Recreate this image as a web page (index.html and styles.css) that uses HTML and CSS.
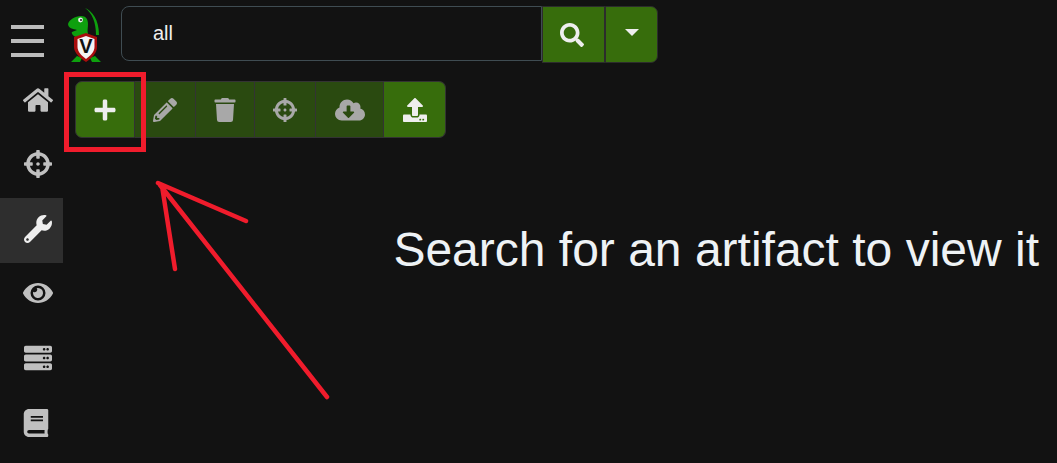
FILE: index.html
```html
<!DOCTYPE html>
<html lang="en">
<head>
    <meta charset="UTF-8">
    <title>Artifacts</title>
    <link rel="stylesheet" href="styles.css">
</head>
<body>
    <div class="app">
        <nav class="sidebar">
            <div class="hamburger"><span></span><span></span><span></span></div>
            <a class="nav-item"><svg class="nav-icon" viewBox="0 0 576 512"><path d="M280.37 148.26L96 300.11V464a16 16 0 0 0 16 16l112.06-.29a16 16 0 0 0 15.92-16V368a16 16 0 0 1 16-16h64a16 16 0 0 1 16 16v95.64a16 16 0 0 0 16 16.05L464 480a16 16 0 0 0 16-16V300L295.67 148.26a12.19 12.19 0 0 0-15.3 0zM571.6 251.47L488 182.56V44.05a12 12 0 0 0-12-12h-56a12 12 0 0 0-12 12v72.61L318.47 43a48 48 0 0 0-61 0L4.34 251.47a12 12 0 0 0-1.6 16.9l25.5 31A12 12 0 0 0 45.15 301l235.22-193.74a12.19 12.19 0 0 1 15.3 0L530.9 301a12 12 0 0 0 16.9-1.6l25.5-31a12 12 0 0 0-1.7-16.93z"/></svg></a>
            <a class="nav-item"><svg class="nav-icon" viewBox="0 0 512 512"><path d="M500 224h-30.364C455.724 130.325 381.675 56.276 288 42.364V12c0-6.627-5.373-12-12-12h-40c-6.627 0-12 5.373-12 12v30.364C130.325 56.276 56.276 130.325 42.364 224H12c-6.627 0-12 5.373-12 12v40c0 6.627 5.373 12 12 12h30.364C56.276 381.675 130.325 455.724 224 469.636V500c0 6.627 5.373 12 12 12h40c6.627 0 12-5.373 12-12v-30.364C381.675 455.724 455.724 381.675 469.636 288H500c6.627 0 12-5.373 12-12v-40c0-6.627-5.373-12-12-12zM288 404.634V364c0-6.627-5.373-12-12-12h-40c-6.627 0-12 5.373-12 12v40.634C165.826 392.232 119.783 346.243 107.366 288H148c6.627 0 12-5.373 12-12v-40c0-6.627-5.373-12-12-12h-40.634C119.768 165.826 165.757 119.783 224 107.366V148c0 6.627 5.373 12 12 12h40c6.627 0 12-5.373 12-12v-40.634C346.174 119.768 392.217 165.757 404.634 224H364c-6.627 0-12 5.373-12 12v40c0 6.627 5.373 12 12 12h40.634C392.232 346.174 346.243 392.217 288 404.634zM288 256c0 17.673-14.327 32-32 32s-32-14.327-32-32c0-17.673 14.327-32 32-32s32 14.327 32 32z"/></svg></a>
            <a class="nav-item active"><svg class="nav-icon" viewBox="0 0 512 512"><path d="M507.73 109.1c-2.24-9.03-13.54-12.09-20.12-5.51l-74.36 74.36-67.88-11.31-11.31-67.88 74.36-74.36c6.62-6.62 3.43-17.9-5.66-20.16-47.38-11.74-99.55.91-136.58 37.93-39.64 39.64-50.55 97.1-34.05 147.2L18.74 402.76c-24.99 24.99-24.99 65.51 0 90.5 24.99 24.99 65.51 24.99 90.5 0l213.21-213.21c50.12 16.71 107.47 5.68 147.37-34.22 37.07-37.07 49.7-89.32 37.91-136.73zM64 472c-13.25 0-24-10.75-24-24 0-13.26 10.75-24 24-24s24 10.74 24 24c0 13.25-10.75 24-24 24z"/></svg></a>
            <a class="nav-item"><svg class="nav-icon" viewBox="0 0 576 512"><path d="M572.52 241.4C518.29 135.59 410.93 64 288 64S57.68 135.64 3.48 241.41a32.35 32.35 0 0 0 0 29.19C57.71 376.41 165.07 448 288 448s230.32-71.64 284.52-177.41a32.35 32.35 0 0 0 0-29.19zM288 400a144 144 0 1 1 144-144 143.93 143.93 0 0 1-144 144zm0-240a95.31 95.31 0 0 0-25.31 3.79 47.85 47.85 0 0 1-66.9 66.9A95.78 95.78 0 1 0 288 160z"/></svg></a>
            <a class="nav-item"><svg class="nav-icon" viewBox="0 0 512 512"><path d="M480 160H32c-17.673 0-32-14.327-32-32V64c0-17.673 14.327-32 32-32h448c17.673 0 32 14.327 32 32v64c0 17.673-14.327 32-32 32zm-48-88c-13.255 0-24 10.745-24 24s10.745 24 24 24 24-10.745 24-24-10.745-24-24-24zm-64 0c-13.255 0-24 10.745-24 24s10.745 24 24 24 24-10.745 24-24-10.745-24-24-24zm112 248H32c-17.673 0-32-14.327-32-32v-64c0-17.673 14.327-32 32-32h448c17.673 0 32 14.327 32 32v64c0 17.673-14.327 32-32 32zm-48-88c-13.255 0-24 10.745-24 24s10.745 24 24 24 24-10.745 24-24-10.745-24-24-24zm-64 0c-13.255 0-24 10.745-24 24s10.745 24 24 24 24-10.745 24-24-10.745-24-24-24zm112 248H32c-17.673 0-32-14.327-32-32v-64c0-17.673 14.327-32 32-32h448c17.673 0 32 14.327 32 32v64c0 17.673-14.327 32-32 32zm-48-88c-13.255 0-24 10.745-24 24s10.745 24 24 24 24-10.745 24-24-10.745-24-24-24zm-64 0c-13.255 0-24 10.745-24 24s10.745 24 24 24 24-10.745 24-24-10.745-24-24-24z"/></svg></a>
            <a class="nav-item"><svg class="nav-icon book" viewBox="0 0 448 512"><path d="M448 360V24c0-13.3-10.7-24-24-24H96C43 0 0 43 0 96v320c0 53 43 96 96 96h328c13.3 0 24-10.7 24-24v-16c0-7.5-3.5-14.3-8.9-18.7-4.2-15.4-4.2-59.3 0-74.7 5.4-4.3 8.9-11.1 8.9-18.6zM128 134c0-3.3 2.7-6 6-6h212c3.3 0 6 2.7 6 6v20c0 3.3-2.7 6-6 6H134c-3.3 0-6-2.7-6-6v-20zm0 64c0-3.3 2.7-6 6-6h212c3.3 0 6 2.7 6 6v20c0 3.3-2.7 6-6 6H134c-3.3 0-6-2.7-6-6v-20zm253.4 250H96c-17.7 0-32-14.3-32-32 0-17.6 14.4-32 32-32h285.4c-1.9 17.1-1.9 46.9 0 64z"/></svg></a>
        </nav>

        <main class="main">
            <header class="topbar">
                <svg class="logo" viewBox="68 8 34 54">
                    <path d="M85 8C92 11 99 19 99 35L96 35C96 22 92 13 85 8z" fill="#0ea00e"/>
                    <path d="M68 24C69 20 75 16 81 16C86 16 88 19 88 24C88 28 87 31 88 34L76 37C73 36 71 33 72 32L77 30C73 29 68 28 68 24z" fill="#0ea00e"/>
                    <path d="M77 56L71 62 80 62 82 58zM90 58L92 62 101 62 95 56z" fill="#0ea00e"/>
                    <circle cx="80.5" cy="20" r="2.4" fill="#eee"/>
                    <circle cx="81" cy="20" r="1" fill="#222"/>
                    <path d="M86 33L97 37 97 47C97 53 92 58 86 62 80 58 74 53 74 47L74 37z" fill="#a80d0d"/>
                    <path d="M86 36L94.500 39 94.500 47C94.500 52 90 56 86 59 82 56 77.500 52 77.500 47L77.500 39z" fill="#f4f4f4"/>
                    <text class="logo-v" x="86" y="53" text-anchor="middle">V</text>
                </svg>
                <div class="search-group">
                    <input class="search-input" type="text" value="all">
                    <button class="btn search-btn"><svg class="btn-icon" viewBox="0 0 512 512"><path d="M505 442.7L405.3 343c-4.5-4.5-10.6-7-17-7H372c27.6-35.3 44-79.7 44-128C416 93.1 322.9 0 208 0S0 93.1 0 208s93.1 208 208 208c48.3 0 92.7-16.4 128-44v16.3c0 6.4 2.5 12.5 7 17l99.7 99.7c9.4 9.4 24.6 9.4 33.9 0l28.3-28.3c9.4-9.4 9.4-24.6.1-34zM208 336c-70.7 0-128-57.2-128-128 0-70.7 57.2-128 128-128 70.7 0 128 57.2 128 128 0 70.7-57.2 128-128 128z"/></svg></button>
                    <button class="btn caret-btn"><span class="caret"></span></button>
                </div>
            </header>

            <div class="toolbar">
                <button class="tool add"><svg class="btn-icon" viewBox="0 0 448 512"><path d="M416 208H272V64c0-17.67-14.33-32-32-32h-32c-17.67 0-32 14.33-32 32v144H32c-17.67 0-32 14.33-32 32v32c0 17.67 14.33 32 32 32h144v144c0 17.67 14.33 32 32 32h32c17.67 0 32-14.33 32-32V304h144c17.67 0 32-14.33 32-32v-32c0-17.67-14.33-32-32-32z"/></svg></button>
                <button class="tool off edit"><svg class="btn-icon" viewBox="0 0 512 512"><path d="M497.9 142.1l-46.1 46.1c-4.7 4.7-12.3 4.7-17 0l-111-111c-4.7-4.7-4.7-12.3 0-17l46.1-46.1c18.7-18.7 49.1-18.7 67.9 0l60.1 60.1c18.8 18.7 18.8 49.1 0 67.9zM284.2 99.8L21.6 362.4.4 483.9c-2.9 16.4 11.4 30.6 27.8 27.8l121.5-21.3 262.6-262.6c4.7-4.7 4.7-12.3 0-17l-111-111c-4.8-4.7-12.4-4.7-17.1 0zM124.1 339.9c-5.5-5.5-5.5-14.3 0-19.8l154-154c5.5-5.5 14.3-5.5 19.8 0s5.5 14.3 0 19.8l-154 154c-5.5 5.5-14.3 5.5-19.8 0zM88 424h48v36.3l-64.5 11.3-31.1-31.1L51.7 376H88v48z"/></svg></button>
                <button class="tool off trash"><svg class="btn-icon" viewBox="0 0 448 512"><path d="M432 32H312l-9.4-18.7A24 24 0 0 0 281.1 0H166.8a23.72 23.72 0 0 0-21.4 13.3L136 32H16A16 16 0 0 0 0 48v32a16 16 0 0 0 16 16h416a16 16 0 0 0 16-16V48a16 16 0 0 0-16-16zM53.2 467a48 48 0 0 0 47.9 45h245.8a48 48 0 0 0 47.9-45L416 128H32z"/></svg></button>
                <button class="tool off hunt"><svg class="btn-icon" viewBox="0 0 512 512"><path d="M500 224h-30.364C455.724 130.325 381.675 56.276 288 42.364V12c0-6.627-5.373-12-12-12h-40c-6.627 0-12 5.373-12 12v30.364C130.325 56.276 56.276 130.325 42.364 224H12c-6.627 0-12 5.373-12 12v40c0 6.627 5.373 12 12 12h30.364C56.276 381.675 130.325 455.724 224 469.636V500c0 6.627 5.373 12 12 12h40c6.627 0 12-5.373 12-12v-30.364C381.675 455.724 455.724 381.675 469.636 288H500c6.627 0 12-5.373 12-12v-40c0-6.627-5.373-12-12-12zM288 404.634V364c0-6.627-5.373-12-12-12h-40c-6.627 0-12 5.373-12 12v40.634C165.826 392.232 119.783 346.243 107.366 288H148c6.627 0 12-5.373 12-12v-40c0-6.627-5.373-12-12-12h-40.634C119.768 165.826 165.757 119.783 224 107.366V148c0 6.627 5.373 12 12 12h40c6.627 0 12-5.373 12-12v-40.634C346.174 119.768 392.217 165.757 404.634 224H364c-6.627 0-12 5.373-12 12v40c0 6.627 5.373 12 12 12h40.634C392.232 346.174 346.243 392.217 288 404.634zM288 256c0 17.673-14.327 32-32 32s-32-14.327-32-32c0-17.673 14.327-32 32-32s32 14.327 32 32z"/></svg></button>
                <button class="tool off download"><svg class="btn-icon wide" viewBox="0 0 640 512"><path d="M537.6 226.6c4.1-10.7 6.4-22.4 6.4-34.6 0-53-43-96-96-96-19.7 0-38.1 6-53.3 16.2C367 64.2 315.3 32 256 32c-88.4 0-160 71.6-160 160 0 2.7.1 5.4.2 8.1C40.2 219.8 0 273.2 0 336c0 79.5 64.5 144 144 144h368c70.7 0 128-57.3 128-128 0-61.9-44-113.6-102.4-125.4zm-132.9 88.7L299.3 420.7c-6.2 6.2-16.4 6.2-22.6 0L171.3 315.3c-10.1-10.1-2.9-27.3 11.3-27.3H248V176c0-8.8 7.2-16 16-16h48c8.8 0 16 7.2 16 16v112h65.4c14.2 0 21.4 17.2 11.3 27.3z"/></svg></button>
                <button class="tool upload"><svg class="btn-icon" viewBox="0 0 512 512"><path d="M296 384h-80c-13.3 0-24-10.7-24-24V192h-87.7c-17.8 0-26.7-21.5-14.1-34.1L242.3 5.7c7.5-7.5 19.8-7.5 27.3 0l152.2 152.2c12.6 12.6 3.7 34.1-14.1 34.1H320v168c0 13.3-10.7 24-24 24zm216-8v112c0 13.3-10.7 24-24 24H24c-13.3 0-24-10.7-24-24V376c0-13.3 10.7-24 24-24h136v8c0 30.9 25.1 56 56 56h80c30.9 0 56-25.1 56-56v-8h136c13.3 0 24 10.7 24 24zm-124 88c0-11-9-20-20-20s-20 9-20 20 9 20 20 20 20-9 20-20zm64 0c0-11-9-20-20-20s-20 9-20 20 9 20 20 20 20-9 20-20z"/></svg></button>
            </div>

            <h1 class="empty-msg">Search for an artifact to view it</h1>
        </main>
    </div>

    <div class="callout-box"></div>
    <svg class="callout-arrow" viewBox="0 0 1057 463">
        <path d="M327 397L160 185M158 183L246 221M162 186L175 269"/>
    </svg>
</body>
</html>
```

FILE: styles.css
```css
body {
    margin: 0;
    background-color: #121212;
    font-family: "Liberation Sans", Arial, sans-serif;
    color: #eee;
    overflow: hidden;
}
button {
    border: none;
    padding: 0;
    cursor: pointer;
}
.app {
    display: flex;
    height: 463px;
}
.sidebar {
    width: 63px;
    flex-shrink: 0;
    display: flex;
    flex-direction: column;
}
.hamburger {
    height: 68.8px;
    flex-shrink: 0;
    box-sizing: border-box;
    padding: 25px 19px 0 11px;
    display: flex;
    flex-direction: column;
    gap: 10px;
}
.hamburger span {
    display: block;
    height: 4px;
    background-color: #bbb;
}
.nav-item {
    height: 64.6px;
    flex-shrink: 0;
    box-sizing: border-box;
    display: flex;
    align-items: center;
    justify-content: flex-end;
    padding: 0 10px 3px 0;
}
.nav-icon {
    width: 30px;
    height: 28px;
    fill: #c0c0c0;
}
.nav-icon.book {
    margin-right: 2px;
}
.nav-item.active {
    background-color: #2e2e2e;
}
.nav-item.active .nav-icon {
    fill: #eee;
}
.main {
    flex: 1;
    min-width: 0;
}
.topbar {
    display: flex;
    align-items: flex-start;
    padding: 6px 0 0 5px;
}
.logo {
    width: 34px;
    height: 54px;
    margin-top: 2px;
}
.logo-v {
    font-family: "Liberation Sans", Arial, sans-serif;
    font-weight: 700;
    font-size: 20px;
    fill: #111;
}
.search-group {
    display: flex;
    margin-left: 19px;
}
.search-input {
    width: 421px;
    height: 55px;
    box-sizing: border-box;
    padding: 0 0 0 31px;
    background-color: #121212;
    border: 1px solid #3f4c52;
    border-radius: 8px 0 0 8px;
    font-family: "Liberation Sans", Arial, sans-serif;
    font-size: 20px;
    color: #eee;
    outline: none;
}
.btn {
    height: 57px;
    background-color: #376d0c;
    display: flex;
    align-items: center;
    justify-content: center;
    border: 1px solid #2c2c2c;
}
.search-btn {
    width: 63px;
    padding-right: 3px;
}
.caret-btn {
    width: 53px;
    border-radius: 0 7px 7px 0;
}
.caret {
    width: 0;
    height: 0;
    margin-bottom: 4px;
    border-left: 7px solid transparent;
    border-right: 7px solid transparent;
    border-top: 7px solid #eee;
}
.btn-icon {
    width: 24px;
    height: 24px;
    fill: #eee;
}
.btn-icon.wide {
    width: 30px;
}
.toolbar {
    display: flex;
    margin: 18px 0 0 12px;
    width: 371px;
    height: 57px;
}
.tool {
    height: 57px;
    display: flex;
    align-items: center;
    justify-content: center;
    background-color: #376d0c;
    border: 1px solid #333;
    border-left: none;
}
.tool.off {
    background-color: #2a4a10;
}
.tool.off .btn-icon {
    fill: #a8a8a8;
}
.add {
    width: 60px;
    border-left: 1px solid #333;
    border-radius: 7px 0 0 7px;
}
.edit {
    width: 61px;
}
.trash {
    width: 59px;
}
.hunt {
    width: 61px;
}
.download {
    width: 68px;
}
.upload {
    width: 62px;
    border-radius: 0 7px 7px 0;
}
.empty-msg {
    margin: 85px 18px 0 0;
    text-align: right;
    font-size: 48px;
    font-weight: 400;
    line-height: 53px;
    color: #eef2f5;
}
.callout-box {
    position: absolute;
    left: 64px;
    top: 72px;
    width: 82px;
    height: 80px;
    box-sizing: border-box;
    border: 5px solid #f01c2c;
}
.callout-arrow {
    position: absolute;
    left: 0;
    top: 0;
    width: 1057px;
    height: 463px;
    fill: none;
    stroke: #f01c2c;
    stroke-width: 4.5;
    stroke-linecap: round;
    pointer-events: none;
}
```
